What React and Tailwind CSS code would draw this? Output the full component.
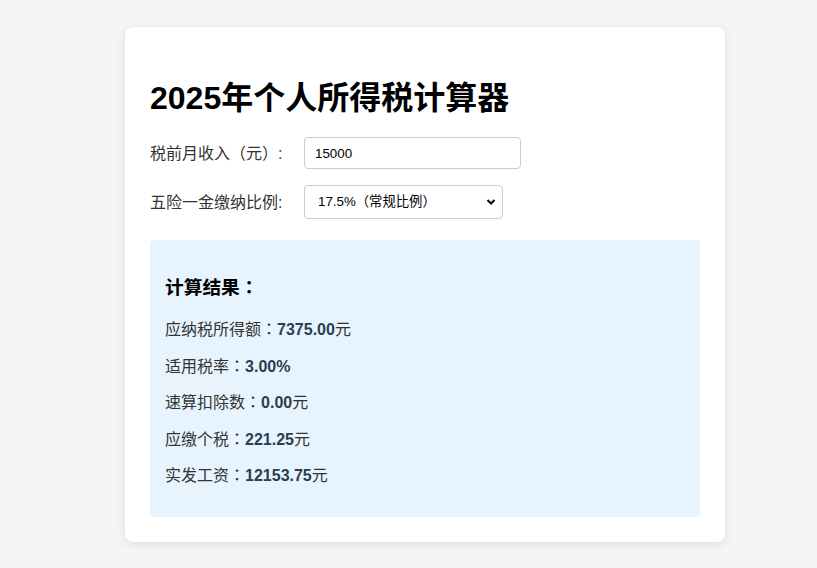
const font = { fontFamily: '"Liberation Sans", "Noto Sans CJK SC", sans-serif' };
const selFont = { fontFamily: '"Liberation Sans", "Noto Sans CJK TC", "Noto Sans CJK SC", sans-serif' };
const punct = { fontFamily: '"Noto Sans CJK TC", "Noto Sans CJK SC", sans-serif', lineHeight: 1 };

function T({ children }) {
  const parts = String(children).split(/([：（）])/);
  return (
    <>
      {parts.map((p, i) =>
        /^[：（）]$/.test(p) ? (
          <span key={i} style={punct}>{p}</span>
        ) : (
          <span key={i}>{p}</span>
        )
      )}
    </>
  );
}

export default function App() {
  const rows = [
    ["应纳税所得额：", "7375.00", "元"],
    ["适用税率：", "3.00%", ""],
    ["速算扣除数：", "0.00", "元"],
    ["应缴个税：", "221.25", "元"],
    ["实发工资：", "12153.75", "元"],
  ];
  return (
    <div className="min-h-[568px] bg-[#f5f5f5] pt-[27px] pl-[125px]" style={font}>
      <div className="w-[600px] bg-white rounded-lg shadow-[0_2px_10px_rgba(0,0,0,0.1)] px-[25px] pt-[53px] pb-[25px]">
        <h1 className="m-0 text-[32px] leading-[37px] font-bold text-black">2025年个人所得税计算器</h1>
        <div className="mt-[20px] flex items-center h-[32px]">
          <label className="w-[154px] text-[16px] leading-[21px] text-[#333]"><T>税前月收入（元）</T>:</label>
          <input
            defaultValue="15000"
            className="w-[217px] h-[32px] border border-[#ccc] rounded-[4px] pl-[10px] text-[13.33px] text-black outline-none"
            style={font}
          />
        </div>
        <div className="mt-[16px] flex items-center h-[34px]">
          <label className="w-[154px] text-[16px] leading-[21px] text-[#333]">五险一金缴纳比例:</label>
          <div className="relative w-[199px] h-[34px]">
            <select
              className="appearance-none w-full h-full border border-[#ccc] rounded-[4px] pl-[13px] text-[13.33px] text-black bg-white outline-none"
              style={selFont}
              defaultValue="17.5"
            >
              <option value="17.5">17.5%（常规比例）</option>
            </select>
            <svg className="absolute right-[7px] top-[13px] pointer-events-none" width="10" height="8" viewBox="0 0 10 8">
              <path d="M1.5 2 L5 5.5 L8.5 2" fill="none" stroke="#111" strokeWidth="2.2" />
            </svg>
          </div>
        </div>
        <div className="mt-[21px] bg-[#e8f4fd] rounded-[4px] px-[15px] pt-[34px] pb-[15px]">
          <h3 className="mt-0 mb-[18px] text-[18.72px] leading-[27px] font-bold text-black"><T>计算结果：</T></h3>
          {rows.map(([a, b, c]) => (
            <p key={a} className="my-[15.6px] text-[16px] leading-[21px] text-[#333]">
              <T>{a}</T>
              <strong className="font-bold text-[#2c3e50]">{b}</strong>
              {c}
            </p>
          ))}
        </div>
      </div>
    </div>
  );
}
